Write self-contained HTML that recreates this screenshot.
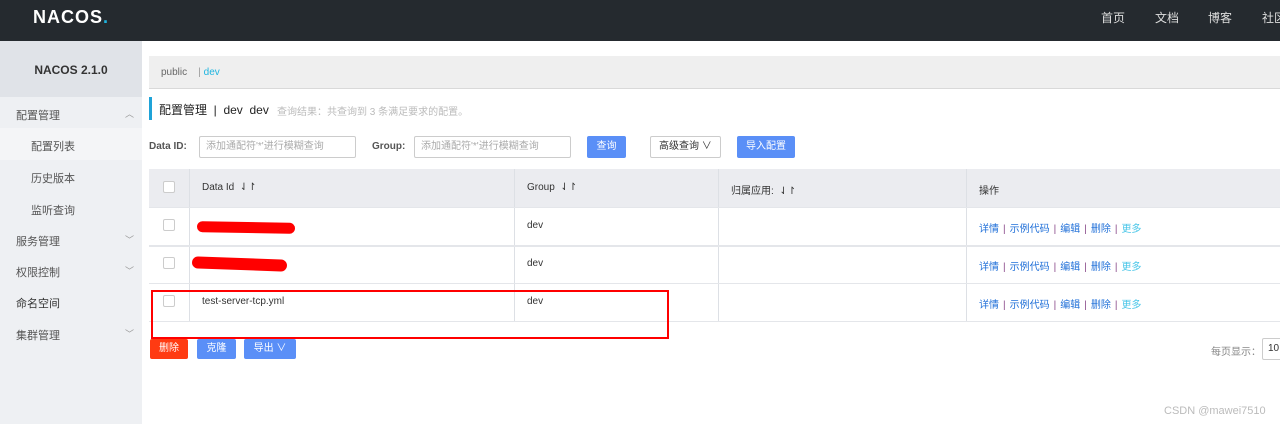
<!DOCTYPE html>
<html><head><meta charset="utf-8"><style>
*{margin:0;padding:0;box-sizing:border-box}
body{width:1280px;height:424px;overflow:hidden;background:#fff;font-family:"Liberation Sans","Noto Sans CJK SC",sans-serif;font-size:12px;color:#333;position:relative}
.a{position:absolute;white-space:nowrap}
.hdr{left:0;top:0;width:1280px;height:41px;background:#252a2f}
.nav{color:#ddd;font-size:12px;top:9px}
.side{left:0;top:41px;width:142px;height:383px;background:#eef0f3}
.mi{left:16px;font-size:11px;color:#555}
.chev{left:125px;font-size:9px;color:#999}
.btn{height:20px;border-radius:2px;color:#fff;font-size:10px;text-align:center;line-height:20px}
.inp{height:22px;border:1px solid #ccc;border-radius:2px;color:#aaa;font-size:10px;line-height:20px;padding-left:6px}
.th{top:169px;height:38px;background:#ebecf0}
.vl{width:1px;background:#dde0e5}
.hl{height:1px;background:#e4e6ea;left:149px;width:1131px}
.cb{width:12px;height:12px;border:1px solid #ccc;border-radius:2px;background:#fff}
.ops{left:979px;font-size:10px;color:#1f6fd8}
.ops i{font-style:normal;color:#8a4a8a;margin:0 4px}
.ops b{font-weight:normal;color:#4ac6e8}
</style></head><body>
<div class="a hdr"></div>
<div class="a" style="left:33px;top:7px;color:#fff;font-size:18px;font-weight:bold;letter-spacing:1px">NACOS<span style="color:#1fb5e0">.</span></div>
<div class="a nav" style="left:1101px">首页</div>
<div class="a nav" style="left:1155px">文档</div>
<div class="a nav" style="left:1208px">博客</div>
<div class="a nav" style="left:1262px">社区</div>
<div class="a side"></div>
<div class="a" style="left:0;top:41px;width:142px;height:56px;background:#e0e3e8"></div>
<div class="a" style="left:0;top:63px;width:142px;text-align:center;font-weight:bold;font-size:12px;color:#333">NACOS 2.1.0</div>
<div class="a" style="left:0;top:128px;width:142px;height:32px;background:#f4f5f7"></div>
<div class="a mi" style="top:107px">配置管理</div><div class="a chev" style="top:107px">︿</div>
<div class="a mi" style="left:31px;top:138px">配置列表</div>
<div class="a mi" style="left:31px;top:170px">历史版本</div>
<div class="a mi" style="left:31px;top:202px">监听查询</div>
<div class="a mi" style="top:233px">服务管理</div><div class="a chev" style="top:233px">﹀</div>
<div class="a mi" style="top:264px">权限控制</div><div class="a chev" style="top:264px">﹀</div>
<div class="a mi" style="top:295px;color:#333">命名空间</div>
<div class="a mi" style="top:327px">集群管理</div><div class="a chev" style="top:327px">﹀</div>

<div class="a" style="left:149px;top:56px;width:1131px;height:33px;background:#efefef;border-bottom:1px solid #d9d9d9"></div>
<div class="a" style="left:161px;top:67px;font-size:10px;color:#666">public &nbsp;&nbsp; <span style="color:#999">|</span> <span style="color:#1fb5e0">dev</span></div>
<div class="a" style="left:149px;top:97px;width:3px;height:23px;background:#1fa3d8"></div>
<div class="a" style="left:159px;top:101px;font-size:12px;color:#222">配置管理 &nbsp;|&nbsp; dev&nbsp; dev</div>
<div class="a" style="left:277px;top:103px;font-size:10px;color:#bbb">查询结果：共查询到 3 条满足要求的配置。</div>

<div class="a" style="left:149px;top:141px;font-size:10px;font-weight:bold;color:#555">Data ID:</div>
<div class="a inp" style="left:199px;top:136px;width:157px">添加通配符'*'进行模糊查询</div>
<div class="a" style="left:372px;top:141px;font-size:10px;font-weight:bold;color:#555">Group:</div>
<div class="a inp" style="left:414px;top:136px;width:157px">添加通配符'*'进行模糊查询</div>
<div class="a btn" style="left:587px;top:136px;width:39px;height:22px;line-height:22px;background:#5a8ff7">查询</div>
<div class="a" style="left:650px;top:136px;width:71px;height:22px;border:1px solid #ccc;border-radius:2px;font-size:10px;line-height:20px;padding-left:8px;color:#333">高级查询 ∨</div>
<div class="a btn" style="left:737px;top:136px;width:58px;height:22px;line-height:22px;background:#5a8ff7">导入配置</div>

<div class="a th" style="left:149px;width:1131px"></div>
<div class="a vl" style="left:189px;top:169px;height:152px"></div>
<div class="a vl" style="left:514px;top:169px;height:152px"></div>
<div class="a vl" style="left:718px;top:169px;height:152px"></div>
<div class="a vl" style="left:966px;top:169px;height:152px"></div>
<div class="a hl" style="top:207px"></div>
<div class="a hl" style="top:245px;height:2px"></div>
<div class="a hl" style="top:283px"></div>
<div class="a hl" style="top:321px"></div>
<div class="a cb" style="left:163px;top:181px"></div>
<div class="a" style="left:202px;top:182px;font-size:10px">Data Id &nbsp;⇃↾</div>
<div class="a" style="left:527px;top:182px;font-size:10px">Group &nbsp;⇃↾</div>
<div class="a" style="left:731px;top:182px;font-size:10px">归属应用: &nbsp;⇃↾</div>
<div class="a" style="left:979px;top:182px;font-size:10px">操作</div>

<div class="a cb" style="left:163px;top:219px"></div>
<div class="a cb" style="left:163px;top:257px"></div>
<div class="a cb" style="left:163px;top:295px"></div>
<div class="a" style="left:197px;top:222px;width:98px;height:11px;background:#f00;border-radius:6px;transform:rotate(1deg)"></div>
<div class="a" style="left:192px;top:258px;width:95px;height:12px;background:#f00;border-radius:6px;transform:rotate(2deg)"></div>
<div class="a" style="left:202px;top:296px;font-size:10px">test-server-tcp.yml</div>
<div class="a" style="left:527px;top:220px;font-size:10px">dev</div>
<div class="a" style="left:527px;top:258px;font-size:10px">dev</div>
<div class="a" style="left:527px;top:296px;font-size:10px">dev</div>
<div class="a ops" style="top:220px">详情<i>|</i>示例代码<i>|</i>编辑<i>|</i>删除<i>|</i><b>更多</b></div>
<div class="a ops" style="top:258px">详情<i>|</i>示例代码<i>|</i>编辑<i>|</i>删除<i>|</i><b>更多</b></div>
<div class="a ops" style="top:296px">详情<i>|</i>示例代码<i>|</i>编辑<i>|</i>删除<i>|</i><b>更多</b></div>
<div class="a" style="left:151px;top:290px;width:518px;height:49px;border:2px solid #f00"></div>

<div class="a btn" style="left:150px;top:339px;width:38px;background:#ff3b12">删除</div>
<div class="a btn" style="left:197px;top:339px;width:39px;background:#5a8ff7">克隆</div>
<div class="a btn" style="left:244px;top:339px;width:52px;background:#5a8ff7">导出 ∨</div>
<div class="a" style="left:1211px;top:343px;font-size:10px;color:#888">每页显示：</div>
<div class="a" style="left:1262px;top:338px;width:30px;height:22px;border:1px solid #ccc;border-radius:2px;font-size:10px;line-height:20px;padding-left:5px">10</div>
<div class="a" style="left:1164px;top:405px;font-size:11px;color:#bbb">CSDN @mawei7510</div>
</body></html>
